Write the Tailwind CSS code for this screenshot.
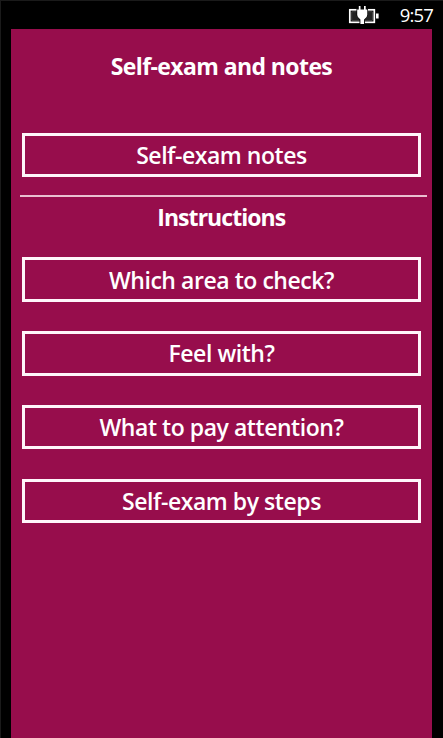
<!DOCTYPE html>
<html lang="en">
  <head>
    <meta charset="UTF-8" />
    <meta name="viewport" content="width=device-width, initial-scale=1.0" />
    <script src="https://cdn.jsdelivr.net/npm/@tailwindcss/browser@4"></script>
    <title>Self-exam and notes</title>
  </head>
  <body class="bg-black">
    <div
      class="h-[738px] w-[443px] overflow-hidden border-t border-l border-[#1a1a1a] pr-[11px] pl-[10px] text-white font-['Open_Sans','Noto_Sans',sans-serif] flex flex-col"
    >
      <header class="h-[28px] shrink-0 flex items-center justify-end">
        <svg class="mr-[20px] h-[20px] w-[32px]" viewBox="0 0 32 20">
          <rect x="1.800" y="4.800" width="24.500" height="12.500" fill="#000" stroke="#fff" stroke-width="1.700" />
          <rect x="3.800" y="6.800" width="20.500" height="8.500" fill="#222" stroke="#666" stroke-width="0.600" />
          <rect x="28" y="8.500" width="2.600" height="5" fill="#fff" />
          <path d="M8.500 3.500h11.500v7l-3 4v4.500h-5.500v-4.500l-3-4z" fill="#000" />
          <path d="M10.800 1h1.700v3.500h3.500v-3.500h1.700v3.500h1.600v5.500q0 2.500-3.200 4.500v4.500h-3.700v-4.500q-3.200-2-3.200-4.500v-5.500h1.600z" fill="#fff" />
        </svg>
        <span class="-mr-[1px] text-[18.500px] leading-none tracking-[-0.850px]">9:57</span>
      </header>

      <main class="grow bg-[#970d4c] pr-[5.500px] pl-[9px] text-center text-[23px] leading-[32px] font-semibold">
        <h1 class="pt-[21px] pr-[3.500px] font-bold tracking-[-0.600px]">Self-exam and notes</h1>

        <button class="mt-[51px] ml-[2px] block h-[44px] w-[399px] border-3 border-[#fff5fa] pb-[1px] tracking-[-0.450px]">
          Self-exam notes
        </button>

        <div class="mt-[18px] h-[2px] bg-[#e9bfd0]"></div>
        <h2 class="mt-[4px] mb-[24.400px] pr-[4px] font-bold tracking-[-0.950px]">Instructions</h2>

        <div class="ml-[2px] flex w-[399px] flex-col gap-[29.400px] tracking-[-0.450px]">
          <button class="h-[44.400px] border-3 border-[#fff5fa]">Which area to check?</button>
          <button class="h-[44.400px] border-3 border-[#fff5fa]">Feel with?</button>
          <button class="h-[44.400px] border-3 border-[#fff5fa]">What to pay attention?</button>
          <button class="h-[44.400px] border-3 border-[#fff5fa]">Self-exam by steps</button>
        </div>
      </main>
    </div>
  </body>
</html>
